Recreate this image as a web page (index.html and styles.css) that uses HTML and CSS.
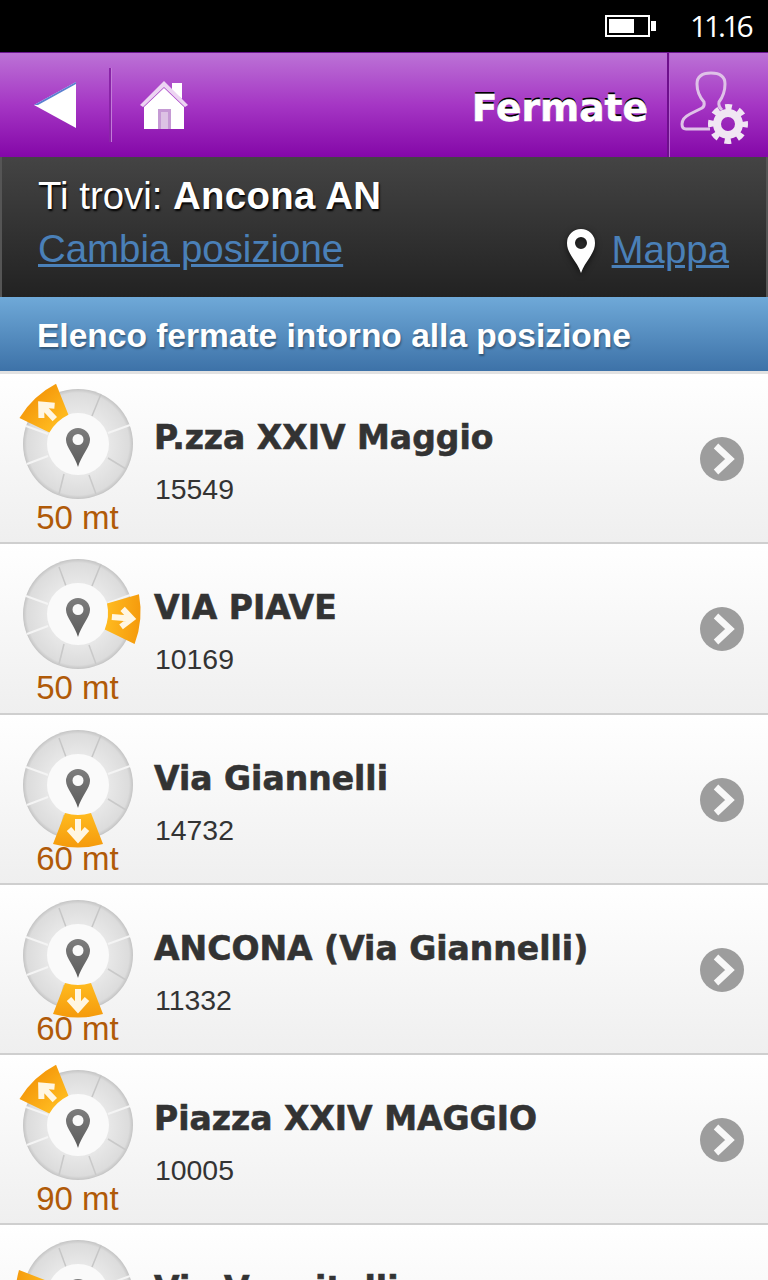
FILE: index.html
```html
<!DOCTYPE html>
<html lang="en">
<head>
    <meta charset="UTF-8">
    <meta name="viewport" content="width=device-width, initial-scale=1.0">
    <title>Fermate</title>
    <link rel="stylesheet" href="styles.css">
</head>
<body>

    <!-- shared icon shapes -->
    <svg class="defs" width="0" height="0">
        <defs>
            <linearGradient id="sectorFill" x1="0" y1="0" x2="0" y2="1">
                <stop offset="0" stop-color="#f59a0c"/>
                <stop offset="1" stop-color="#ffbb20"/>
            </linearGradient>
            <linearGradient id="pinFill" x1="0" y1="0" x2="0" y2="1">
                <stop offset="0" stop-color="#7d7d7d"/>
                <stop offset="1" stop-color="#5c5c5c"/>
            </linearGradient>
            <radialGradient id="ringFill" cx="0.5" cy="0.5" r="0.5">
                <stop offset="0.55" stop-color="#e8e8e8"/>
                <stop offset="0.93" stop-color="#dcdcdc"/>
                <stop offset="1" stop-color="#c4c4c4"/>
            </radialGradient>
            <symbol id="dial" viewBox="-65 -65 130 130" overflow="visible">
                <circle r="55" fill="url(#ringFill)"/>
                <g stroke="#c6c6c6" stroke-width="1.5">
                    <path d="M-12 -28 L-19 -47"/>
                    <path d="M14 -28 L23 -50"/>
                </g>
                <g stroke="#f4f4f4" stroke-width="2">
                    <path d="M30 -11 L52 -19"/>
                    <path d="M-30 -10 L-52 -18"/>
                    <path d="M-30 12 L-51 20"/>
                </g>
                <g stroke="#c9c9c9" stroke-width="1.5">
                    <path d="M30 14 L48 25"/>
                    <path d="M-14 30 L-19 50"/>
                    <path d="M11 31 L18 50"/>
                </g>
                <circle r="31" fill="#fafafa"/>
                <path d="M0 23 C-3 12 -12 3 -12 -4 A12 12 0 0 1 12 -4 C12 3 3 12 0 23Z M0 -10 A5.5 5.5 0 1 0 0 1 A5.5 5.5 0 1 0 0 -10Z" fill="url(#pinFill)" fill-rule="evenodd"/>
            </symbol>
            <symbol id="sector" viewBox="-30 -70 60 70" overflow="visible">
                <path d="M-13 -28 Q0 -32 13 -28 L25 -59 Q0 -66 -25 -59Z" fill="url(#sectorFill)"/>
                <path d="M0 -34 V-52 M-9 -44 L0 -54 L9 -44" fill="none" stroke="#fff6e2" stroke-width="6"/>
            </symbol>
            <symbol id="next" viewBox="0 0 44 44">
                <circle cx="22" cy="22" r="22" fill="#9d9d9d"/>
                <path d="M16 9 L30 22 L16 35" fill="none" stroke="#f8f8f8" stroke-width="6.5"/>
            </symbol>
        </defs>
    </svg>

    <div class="status-bar">
        <span class="battery"><span class="battery-level"></span></span>
        <span class="battery-tip"></span>
        <span class="clock">11.16</span>
    </div>

    <header class="top-bar">
        <div class="nav-btn back-btn">
            <svg width="44" height="50" viewBox="0 0 44 50">
                <path d="M1 25 L43 2 L43 48Z" fill="#fff"/>
                <path d="M1 25 L43 2 L43 4 L5 25Z" fill="#5a7fd0"/>
            </svg>
        </div>
        <div class="nav-btn home-btn">
            <svg width="50" height="52" viewBox="0 0 50 52">
                <path d="M33 4 H43 V20 L33 12Z" fill="#fff"/>
                <path d="M1 26 L25 2 L49 26 L46 28 L25 8 L4 28Z" fill="#ecd4f2"/>
                <path d="M5 28 L25 9 L45 28 V50 H5Z" fill="#fff"/>
                <path d="M19 30 H32 V50 H19Z" fill="#c59ad4"/>
                <path d="M22 33 H29 V50 H22Z" fill="#dcc2e4"/>
            </svg>
        </div>
        <h1 class="page-title">Fermate</h1>
        <div class="user-btn">
            <svg width="90" height="96" viewBox="669 57 90 96">
                <path d="M710 129 H686 Q682 129 682 124 Q682 118 690 114 L702 108 Q705 106 704 102 Q697 94 697 84 Q697 73 711 73 Q725 73 725 84 Q725 94 719 102 Q718 106 722 110" fill="none" stroke="#dfc2e8" stroke-width="3"/>
                <circle cx="728" cy="124" r="11" fill="none" stroke="#f0e6f3" stroke-width="8"/>
                <circle cx="728" cy="124" r="17" fill="none" stroke="#f0e6f3" stroke-width="6" stroke-dasharray="6.68 6.67" stroke-dashoffset="3.3"/>
            </svg>
        </div>
    </header>

    <section class="location">
        <div class="location-left">
            <p class="here">Ti trovi: <strong class="place">Ancona AN</strong></p>
            <a class="link" href="#">Cambia posizione</a>
        </div>
        <div class="location-right">
            <svg class="map-pin" width="30" height="44" viewBox="0 0 30 44">
                <path d="M15 44 C11 32 1 25 1 14 A14 14 0 0 1 29 14 C29 25 19 32 15 44Z M15 8 A6 6 0 1 0 15 20 A6 6 0 1 0 15 8Z" fill="#fff" fill-rule="evenodd"/>
            </svg>
            <a class="link" href="#">Mappa</a>
        </div>
    </section>

    <div class="list-title">Elenco fermate intorno alla posizione</div>

    <ul class="stops">
        <li class="stop">
            <div class="dist">
                <svg class="dial" width="130" height="130" viewBox="-65 -65 130 130"><use href="#dial" x="-65" y="-65" width="130" height="130"/><use href="#sector" x="-30" y="-70" width="60" height="70" transform="rotate(-43)"/></svg>
                <span class="meters">50 mt</span>
            </div>
            <div class="stop-info">
                <div class="stop-name">P.zza XXIV Maggio</div>
                <div class="stop-code">15549</div>
            </div>
            <svg class="chevron" width="44" height="44"><use href="#next"/></svg>
        </li>
        <li class="stop">
            <div class="dist">
                <svg class="dial" width="130" height="130" viewBox="-65 -65 130 130"><use href="#dial" x="-65" y="-65" width="130" height="130"/><use href="#sector" x="-30" y="-70" width="60" height="70" transform="rotate(95)"/></svg>
                <span class="meters">50 mt</span>
            </div>
            <div class="stop-info">
                <div class="stop-name">VIA PIAVE</div>
                <div class="stop-code">10169</div>
            </div>
            <svg class="chevron" width="44" height="44"><use href="#next"/></svg>
        </li>
        <li class="stop">
            <div class="dist">
                <svg class="dial" width="130" height="130" viewBox="-65 -65 130 130"><use href="#dial" x="-65" y="-65" width="130" height="130"/><use href="#sector" x="-30" y="-70" width="60" height="70" transform="rotate(180)"/></svg>
                <span class="meters">60 mt</span>
            </div>
            <div class="stop-info">
                <div class="stop-name">Via Giannelli</div>
                <div class="stop-code">14732</div>
            </div>
            <svg class="chevron" width="44" height="44"><use href="#next"/></svg>
        </li>
        <li class="stop">
            <div class="dist">
                <svg class="dial" width="130" height="130" viewBox="-65 -65 130 130"><use href="#dial" x="-65" y="-65" width="130" height="130"/><use href="#sector" x="-30" y="-70" width="60" height="70" transform="rotate(180)"/></svg>
                <span class="meters">60 mt</span>
            </div>
            <div class="stop-info">
                <div class="stop-name">ANCONA (Via Giannelli)</div>
                <div class="stop-code">11332</div>
            </div>
            <svg class="chevron" width="44" height="44"><use href="#next"/></svg>
        </li>
        <li class="stop">
            <div class="dist">
                <svg class="dial" width="130" height="130" viewBox="-65 -65 130 130"><use href="#dial" x="-65" y="-65" width="130" height="130"/><use href="#sector" x="-30" y="-70" width="60" height="70" transform="rotate(-43)"/></svg>
                <span class="meters">90 mt</span>
            </div>
            <div class="stop-info">
                <div class="stop-name">Piazza XXIV MAGGIO</div>
                <div class="stop-code">10005</div>
            </div>
            <svg class="chevron" width="44" height="44"><use href="#next"/></svg>
        </li>
        <!-- last row runs off the screen -->
        <li class="stop">
            <div class="dist">
                <svg class="dial" width="130" height="130" viewBox="-65 -65 130 130"><use href="#dial" x="-65" y="-65" width="130" height="130"/><use href="#sector" x="-30" y="-70" width="60" height="70" transform="rotate(-90)"/></svg>
            </div>
            <div class="stop-info">
                <div class="stop-name">Via Vanvitelli</div>
            </div>
        </li>
    </ul>

</body>
</html>
```

FILE: styles.css
```css
html, body {
    margin: 0;
    padding: 0;
    height: 1280px;
    overflow: hidden;
}

body {
    font-family: "Liberation Sans", Arial, sans-serif;
    background-color: #fff;
    color: #333;
}

.defs {
    display: block;
    height: 0;
}

/* Status bar */
.status-bar {
    height: 52px;
    background-color: #000;
    color: #fff;
    display: flex;
    align-items: center;
    justify-content: flex-end;
    padding-right: 17px;
}

.battery {
    width: 45px;
    height: 22px;
    border: 2px solid #fff;
    box-sizing: border-box;
    padding: 2px;
    display: flex;
}

.battery-level {
    width: 25px;
    background-color: #fff;
}

.battery-tip {
    width: 5px;
    height: 10px;
    background-color: #fff;
    margin-left: 1px;
    margin-right: 34px;
}

.clock {
    font-family: "Open Sans", sans-serif;
    font-size: 30px;
    letter-spacing: -3.2px;
    line-height: 52px;
    width: 61px;
}

/* Purple header */
.top-bar {
    height: 105px;
    box-sizing: border-box;
    border-top: 1px solid #6a1590;
    background: linear-gradient(to bottom, #bc72d6 0%, #a536c4 50%, #8407a8 100%);
    display: flex;
    align-items: center;
}

.nav-btn {
    display: flex;
    align-items: center;
}

.back-btn {
    width: 111px;
    height: 74px;
    box-sizing: border-box;
    padding-left: 33px;
    border-right: 2px solid #8a24a8;
    box-shadow: 1px 0 0 #c27bd8;
}

.home-btn {
    padding-left: 28px;
}

.page-title {
    flex: 1;
    margin: 0;
    padding: 6px 19px 0 0;
    text-align: right;
    font-family: "DejaVu Sans", sans-serif;
    font-weight: bold;
    font-size: 37.6px;
    color: #fff;
    -webkit-text-stroke: 0.6px #fff;
    text-shadow: 0 -2px 0 #000;
}

.user-btn {
    width: 101px;
    height: 104px;
    box-sizing: border-box;
    border-left: 2px solid #6d0f8c;
    box-shadow: inset 1px 0 0 #b565cf;
    display: flex;
    align-items: center;
}

/* Location panel */
.location {
    height: 140px;
    box-sizing: border-box;
    background: linear-gradient(to bottom, #444 0%, #222 100%);
    border-left: 2px solid #555;
    border-right: 2px solid #555;
    padding: 16px 37px 0 36px;
    display: flex;
    justify-content: space-between;
}

.here {
    margin: 0;
    font-size: 38.4px;
    line-height: 46px;
    color: #fff;
    text-shadow: 1px 2px 2px #000;
}

.place {
    letter-spacing: 0.3px;
}

.link {
    color: #4a80b8;
    font-size: 38.4px;
    line-height: 50px;
    text-decoration: underline;
}

.location-left .link {
    display: block;
    margin-top: 5px;
}

.location-right {
    display: flex;
    align-items: flex-end;
    gap: 16px;
    padding-bottom: 22px;
}

.map-pin {
    margin-bottom: 2px;
    filter: drop-shadow(0 2px 3px rgba(0, 0, 0, 0.6));
}

/* Blue title */
.list-title {
    height: 77px;
    box-sizing: border-box;
    background: linear-gradient(to bottom, #6fa9d8 0%, #3d72a8 100%);
    border-bottom: 3px solid #e2e2e2;
    padding-left: 37px;
    color: #fff;
    font-size: 33.5px;
    font-weight: bold;
    line-height: 78px;
    text-shadow: 1px 2px 2px rgba(0, 0, 0, 0.35);
}

/* Stops */
.stops {
    list-style: none;
    margin: 0;
    padding: 0;
}

.stop {
    height: 170.3px;
    box-sizing: border-box;
    background: linear-gradient(to bottom, #fff 0%, #efefef 100%);
    border-bottom: 2px solid #cfcfcf;
    display: flex;
}

.dist {
    width: 155px;
    flex-shrink: 0;
    padding-top: 5px;
    display: flex;
    flex-direction: column;
    align-items: center;
    box-sizing: border-box;
}

.dial {
    overflow: visible;
    flex-shrink: 0;
}

.meters {
    margin-top: -9px;
    font-size: 33px;
    line-height: 36px;
    color: #b05a08;
}

.stop-info {
    flex: 1;
}

.stop-name {
    margin: 44px 0 0 -1px;
    font-family: "DejaVu Sans", sans-serif;
    font-weight: bold;
    font-size: 33px;
    line-height: 40px;
    color: #333;
    -webkit-text-stroke: 0.6px #333;
}

.stop-code {
    margin-top: 14px;
    font-size: 28.4px;
    line-height: 34px;
    color: #333;
}

.chevron {
    margin: 63px 24px 0 0;
}
```
